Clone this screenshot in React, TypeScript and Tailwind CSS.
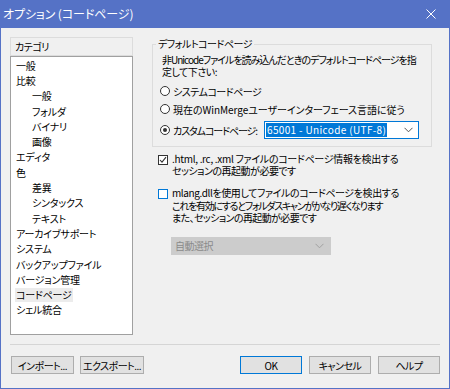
import React from "react";

const font = "font-['Noto_Sans_CJK_JP','Noto_Sans',sans-serif] [font-feature-settings:'palt'] tracking-[-0.5px] whitespace-nowrap";

const items: { label: string; indent?: boolean; selected?: boolean }[] = [
  { label: "一般" },
  { label: "比較" },
  { label: "一般", indent: true },
  { label: "フォルダ", indent: true },
  { label: "バイナリ", indent: true },
  { label: "画像", indent: true },
  { label: "エディタ" },
  { label: "色" },
  { label: "差異", indent: true },
  { label: "シンタックス", indent: true },
  { label: "テキスト", indent: true },
  { label: "アーカイブサポート" },
  { label: "システム" },
  { label: "バックアップファイル" },
  { label: "バージョン管理" },
  { label: "コードページ", selected: true },
  { label: "シェル統合" },
];

function Radio({ checked }: { checked?: boolean }) {
  return (
    <span className="w-[10px] h-[10px] rounded-full border border-[#333333] bg-white flex items-center justify-center shrink-0">
      {checked && <span className="w-[4px] h-[4px] rounded-full bg-[#333333]" />}
    </span>
  );
}

function Chevron({ color }: { color: string }) {
  return (
    <svg width="9" height="6" viewBox="0 0 9 6" fill="none">
      <path d="M0.5 0.8 L4.5 4.8 L8.5 0.8" stroke={color} strokeWidth="1" />
    </svg>
  );
}

function Btn({ label, primary }: { label: string; primary?: boolean }) {
  return (
    <div
      className={`h-[18px] flex items-center justify-center bg-[#e1e1e1] border text-[10px] text-black ${
        primary ? "border-[#0078d7]" : "border-[#adadad]"
      }`}
    >
      {label}
    </div>
  );
}

export default function App() {
  return (
    <div className={`w-[450px] h-[389px] bg-[#f0f0f0] border border-[#5572c6] flex flex-col ${font} text-black`}>
      {/* Title bar */}
      <div className="h-[28px] -mt-[1px] -mx-[1px] bg-[#5572c6] flex items-center justify-between pl-[3px] pr-[14px] shrink-0">
        <span className="text-white text-[12px] leading-none tracking-[-0.1px]">オプション (コードページ)</span>
        <svg width="10" height="10" viewBox="0 0 10 10">
          <path d="M0.5 0.5 L9.5 9.5 M9.5 0.5 L0.5 9.5" stroke="white" strokeWidth="1" />
        </svg>
      </div>

      {/* Main */}
      <div className="flex flex-row h-[307px] shrink-0">
        {/* Left */}
        <div className="ml-[9px] mt-[9px] w-[123px] flex flex-col">
          <div className="h-[19px] border border-[#dcdcdc] bg-[#f0f0f0] flex items-center pl-[4px] text-[10px]">
            カテゴリ
          </div>
          <div className="h-[279px] border border-[#a0a0a0] bg-white pt-[1px]">
            {items.map((it, i) => (
              <div
                key={i}
                className={`h-[15.3px] flex items-center text-[10px] leading-none tracking-[-0.2px] ${it.indent ? "pl-[20px]" : "pl-[4px]"}`}
              >
                <span className={`px-[1px] py-[2px] ${it.selected ? "bg-[#ececec]" : ""}`}>{it.label}</span>
              </div>
            ))}
          </div>
        </div>

        {/* Right */}
        <div className="ml-[19px] w-[280px] flex flex-col">
          <fieldset className="mt-[10px] h-[109px] border border-[#dcdcdc] pl-[7px] pt-[4px] text-[10px] shrink-0">
            <legend className="-ml-[4px] px-[2px] leading-[12px]">デフォルトコードページ</legend>
            <div className="ml-[2px] leading-[12px] flex flex-col">
              <span className="tracking-[-1px]">非Unicodeファイルを読み込んだときのデフォルトコードページを指</span>
              <span>定して下さい:</span>
            </div>
            <div className="mt-[4px] h-[18px] flex items-center gap-[3px]">
              <Radio />
              <span>システムコードページ</span>
            </div>
            <div className="h-[18px] flex items-center gap-[3px]">
              <Radio />
              <span className="tracking-[-0.05px]">現在のWinMergeユーザーインターフェース言語に従う</span>
            </div>
            <div className="mt-[3px] h-[18px] flex items-center">
              <div className="flex items-center gap-[3px] w-[104px] shrink-0">
                <Radio checked />
                <span className="tracking-[-1.1px]">カスタムコードページ:</span>
              </div>
              <div className="w-[155px] h-[18px] border border-[#0078d7] bg-white flex items-center justify-between pl-[1px] pr-[5px] shrink-0">
                <span className="bg-[#0078d7] text-white leading-[14px] px-[1px] tracking-[0.35px]">65001 - Unicode (UTF-8)</span>
                <Chevron color="#555555" />
              </div>
            </div>
          </fieldset>

          <div className="mt-[6px] ml-[6px] flex items-start gap-[4px] text-[10px] leading-[11.7px]">
            <span className="mt-[2px] w-[10px] h-[10px] border border-[#333333] bg-white flex items-center justify-center shrink-0">
              <svg width="8" height="8" viewBox="0 0 8 8">
                <path d="M1 4 L3 6.2 L7 1.2" stroke="#333333" strokeWidth="1.1" fill="none" />
              </svg>
            </span>
            <div className="flex flex-col">
              <span className="tracking-[-0.3px]">.html, .rc, .xml ファイルのコードページ情報を検出する</span>
              <span>セッションの再起動が必要です</span>
            </div>
          </div>

          <div className="mt-[11px] ml-[6px] flex items-start gap-[4px] text-[10px] leading-[12.5px]">
            <span className="mt-[2px] w-[10px] h-[10px] border border-[#0078d7] bg-white shrink-0" />
            <div className="flex flex-col">
              <span className="tracking-[-0.4px]">mlang.dllを使用してファイルのコードページを検出する</span>
              <span className="tracking-[-1.3px]">これを有効にするとフォルダスキャンがかなり遅くなります</span>
              <span className="tracking-[-0.6px]">また、セッションの再起動が必要です</span>
            </div>
          </div>

          <div className="mt-[12px] ml-[19px] w-[160px] h-[18px] bg-[#cccccc] border border-[#cccccc] flex items-center justify-between pl-[3px] pr-[6px] text-[10px] text-[#8a8a8a]">
            <span>自動選択</span>
            <Chevron color="#a0a0a0" />
          </div>
        </div>
      </div>

      {/* Separator */}
      <div className="mt-[9px] mx-[9px] h-[1px] bg-[#d5d5d5] shrink-0" />

      {/* Buttons */}
      <div className="mt-[11px] mx-[9px] flex items-center shrink-0">
        <div className="w-[63px] ml-[1px]">
          <Btn label="インポート..." />
        </div>
        <div className="w-[64px] ml-[6px]">
          <Btn label="エクスポート..." />
        </div>
        <div className="flex-1" />
        <div className="w-[62px]">
          <Btn label="OK" primary />
        </div>
        <div className="w-[62px] ml-[7px]">
          <Btn label="キャンセル" />
        </div>
        <div className="w-[62px] ml-[7px]">
          <Btn label="ヘルプ" />
        </div>
      </div>
    </div>
  );
}
